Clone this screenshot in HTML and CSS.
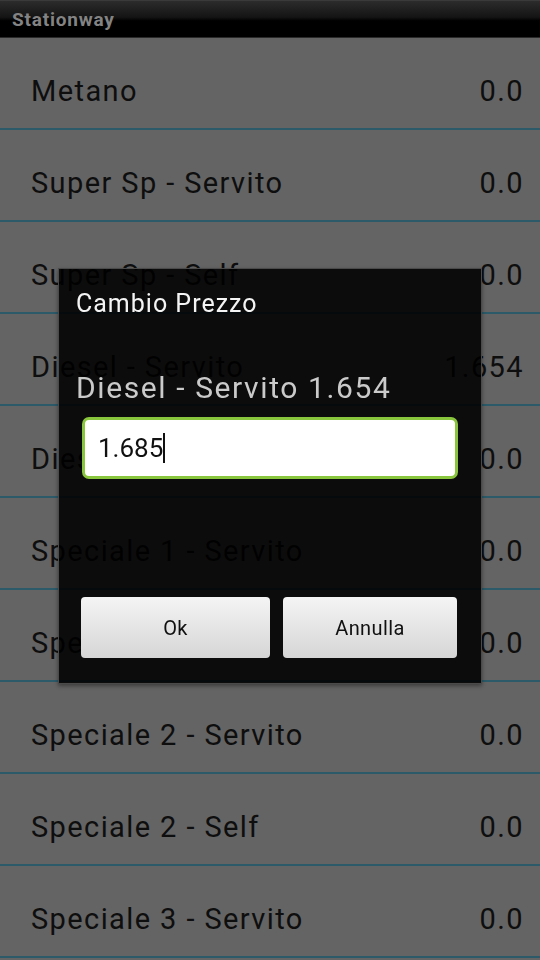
FILE: index.html
```html
<!DOCTYPE html>
<html lang="it">
<head>
    <meta charset="UTF-8">
    <meta name="viewport" content="width=device-width, initial-scale=1.0">
    <title>Stationway</title>
    <link rel="stylesheet" href="styles.css">
</head>
<body>
    <div class="titlebar">Stationway</div>
    <ul class="price-list">
        <li><span>Metano</span><span>0.0</span></li>
        <li><span>Super Sp - Servito</span><span>0.0</span></li>
        <li><span>Super Sp - Self</span><span>0.0</span></li>
        <li><span>Diesel - Servito</span><span>1.654</span></li>
        <li><span>Diesel - Self</span><span>0.0</span></li>
        <li><span>Speciale 1 - Servito</span><span>0.0</span></li>
        <li><span>Speciale 1 - Self</span><span>0.0</span></li>
        <li><span>Speciale 2 - Servito</span><span>0.0</span></li>
        <li><span>Speciale 2 - Self</span><span>0.0</span></li>
        <li><span>Speciale 3 - Servito</span><span>0.0</span></li>
    </ul>

    <div class="dialog">
        <div class="dialog-title">Cambio Prezzo</div>
        <div class="dialog-message">Diesel - Servito 1.654</div>
        <div class="price-input"><span>1.685</span><span class="cursor"></span></div>
        <div class="dialog-buttons">
            <button class="btn-ok">Ok</button>
            <button class="btn-cancel">Annulla</button>
        </div>
    </div>
</body>
</html>
```

FILE: styles.css
```css
body {
    margin: 0;
    font-family: Roboto, "Liberation Sans", sans-serif;
    background-color: #646464;
    width: 540px;
    height: 960px;
    overflow: hidden;
}

.titlebar {
    height: 36px;
    line-height: 38px;
    padding-left: 12px;
    font-size: 19px;
    font-weight: bold;
    letter-spacing: 0.8px;
    color: #838383;
    background: linear-gradient(#2c2c2c, #141414 45%, #000 55%, #000);
    border-top: 1px solid #3a3a3a;
    border-bottom: 1px solid #2a2a2a;
}

.price-list {
    list-style-type: none;
    margin: 0;
    padding: 0;
}

.price-list li {
    display: flex;
    justify-content: space-between;
    align-items: center;
    height: 74px;
    padding: 16px 16px 0 31px;
    font-size: 29px;
    letter-spacing: 1.4px;
    color: #0e0e0e;
    border-bottom: 2px solid #2c5a68;
}

.dialog {
    position: fixed;
    left: 58px;
    top: 268px;
    width: 422px;
    height: 414px;
    background-color: rgba(0, 0, 0, 0.88);
    border: 1px solid #4a4a4a;
    box-shadow: 0 2px 4px rgba(0, 0, 0, 0.4);
    display: flex;
    flex-direction: column;
}

.dialog-title {
    margin: 20px 0 0 17px;
    font-size: 25px;
    line-height: 30px;
    letter-spacing: 1px;
    color: #f4f4f4;
}

.dialog-message {
    margin: 51px 0 0 17px;
    font-size: 30px;
    line-height: 36px;
    letter-spacing: 1.6px;
    color: #cacaca;
}

.price-input {
    margin: 11px 23px 0 23px;
    height: 56px;
    background-color: #fff;
    border: 3px solid #8ac53e;
    border-radius: 7px;
    display: flex;
    align-items: center;
    padding-left: 13px;
    font-size: 26px;
    color: #111;
}

.cursor {
    display: inline-block;
    width: 2px;
    height: 30px;
    background-color: #111;
}

.dialog-buttons {
    display: flex;
    gap: 13px;
    margin: 118px 23px 0 22px;
}

.dialog-buttons button {
    height: 61px;
    border: none;
    border-radius: 4px;
    background: linear-gradient(#f4f4f4, #d6d6d6);
    font-family: Roboto, "Liberation Sans", sans-serif;
    font-size: 20px;
    letter-spacing: 0.4px;
    color: #111;
    padding: 0;
}

.btn-ok {
    width: 189px;
}

.btn-cancel {
    width: 174px;
}
```
